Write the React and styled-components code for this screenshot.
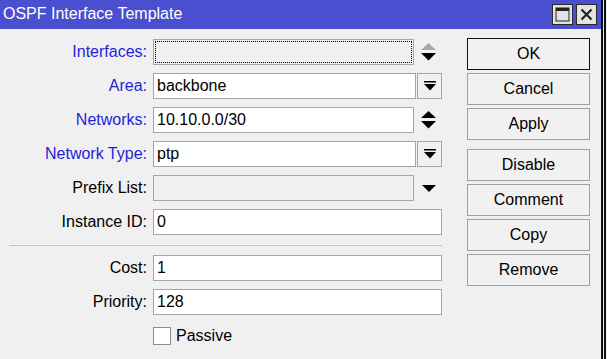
import React from 'react'
import styled, { createGlobalStyle } from 'styled-components'

const GlobalStyle = createGlobalStyle`
  html, body {
    margin: 0;
    padding: 0;
    background: #f0f0f0;
    font-family: "Liberation Sans", Arial, sans-serif;
  }
`

const upper = [
  { label: 'Interfaces', accent: true, value: '', disabled: true, focused: true, addon: 'spin-off' },
  { label: 'Area', accent: true, value: 'backbone', addon: 'drop' },
  { label: 'Networks', accent: true, value: '10.10.0.0/30', addon: 'spin' },
  { label: 'Network Type', accent: true, value: 'ptp', addon: 'drop' },
  { label: 'Prefix List', value: '', disabled: true, addon: 'arrow' },
  { label: 'Instance ID', value: '0' }
]

const lower = [
  { label: 'Cost', value: '1' },
  { label: 'Priority', value: '128' }
]

const actions = ['OK', 'Cancel', 'Apply', 'Disable', 'Comment', 'Copy', 'Remove']

function Spinner ({ dimUp }) {
  return (
    <svg width='15' height='18' viewBox='0 0 15 18'>
      <polygon points='7.5,0 15,7 0,7' fill={dimUp ? '#a3a9a3' : '#000'} />
      <polygon points='0,10 15,10 7.5,17.5' fill='#000' />
    </svg>
  )
}

function DropIcon () {
  return (
    <svg width='12' height='10' viewBox='0 0 12 10'>
      <rect x='0' y='0' width='12' height='1.5' fill='#000' />
      <polygon points='0,3 12,3 6,9.5' fill='#000' />
    </svg>
  )
}

function Addon ({ kind }) {
  if (kind === 'drop') return <DropButton><DropIcon /></DropButton>
  if (kind === 'spin') return <IconSlot><Spinner /></IconSlot>
  if (kind === 'spin-off') return <IconSlot><Spinner dimUp /></IconSlot>
  if (kind === 'arrow') {
    return (
      <IconSlot>
        <svg width='14' height='7' viewBox='0 0 14 7'>
          <polygon points='0,0 14,0 7,7' fill='#000' />
        </svg>
      </IconSlot>
    )
  }
  return null
}

function FieldRow ({ row }) {
  return (
    <Row>
      <Label $accent={row.accent}>{row.label}:</Label>
      <Field>
        <Input $disabled={row.disabled} $trimmed={row.addon === 'drop'}>
          {row.focused && <Focus />}
          {row.value}
        </Input>
        {row.addon && <Addon kind={row.addon} />}
      </Field>
    </Row>
  )
}

export default function App () {
  return (
    <>
      <GlobalStyle />
      <Frame>
        <TitleBar>
          <TitleText>OSPF Interface Template</TitleText>
          <TitleButtons>
            <TitleButton>
              <svg width='15' height='15' viewBox='0 0 15 15'>
                <rect x='1' y='1' width='13' height='13' fill='none' stroke='#222' strokeWidth='1' />
                <rect x='1' y='1' width='13' height='3' fill='#222' />
              </svg>
            </TitleButton>
            <TitleButton>
              <svg width='13' height='13' viewBox='0 0 13 13'>
                <path d='M1.5 1.5 L11.5 11.5 M11.5 1.5 L1.5 11.5' stroke='#222' strokeWidth='2.2' />
              </svg>
            </TitleButton>
          </TitleButtons>
        </TitleBar>
        <Body>
          <Form>
            {upper.map(row => <FieldRow key={row.label} row={row} />)}
            <Divider />
            {lower.map(row => <FieldRow key={row.label} row={row} />)}
            <Row>
              <span />
              <CheckLine>
                <Check />
                <span>Passive</span>
              </CheckLine>
            </Row>
          </Form>
          <Actions>
            {actions.map((name, i) => (
              <Button key={name} $primary={i === 0} $spaced={name === 'Disable'}>
                {name}
              </Button>
            ))}
          </Actions>
        </Body>
      </Frame>
    </>
  )
}

const Frame = styled.div`
  width: 601px;
  min-height: 100vh;
  background: #f0f0f0;
  box-shadow: 2px 0 0 #111, 3px 0 0 #e4e4e4, 5px 0 0 #111;
`

const TitleBar = styled.div`
  height: 29px;
  background: #4a4fcf;
  display: flex;
  align-items: center;
  justify-content: space-between;
  padding: 0 4px 0 3px;
`

const TitleText = styled.span`
  color: #fff;
  font-size: 16px;
  padding-bottom: 1px;
`

const TitleButtons = styled.div`
  display: flex;
  gap: 3px;
`

const TitleButton = styled.div`
  width: 19px;
  height: 19px;
  border: 1px solid #2a2a2a;
  background: #e3e3e3;
  display: flex;
  align-items: center;
  justify-content: center;
`

const Body = styled.div`
  display: flex;
  align-items: flex-start;
  gap: 25px;
  padding: 9px 0 0 9px;
`

const Form = styled.div`
  display: flex;
  flex-direction: column;
  gap: 8px;
  width: 433px;
  padding-top: 1px;
`

const Row = styled.div`
  display: grid;
  grid-template-columns: 138px 289px;
  column-gap: 6px;
  align-items: center;
  height: 26px;
`

const Label = styled.span`
  text-align: right;
  font-size: 16px;
  color: ${p => (p.$accent ? '#1f1fd8' : '#000')};
  white-space: nowrap;
`

const Field = styled.div`
  display: flex;
  height: 26px;
  gap: 1px;
`

const Input = styled.div`
  position: relative;
  flex: 1;
  box-sizing: border-box;
  height: 26px;
  border: 1px solid #a5a5a5;
  background: ${p => (p.$disabled ? '#f0f0f0' : '#fff')};
  font-size: 16px;
  line-height: 24px;
  padding-left: 3px;
  color: #000;
`

const Focus = styled.div`
  position: absolute;
  inset: 1px;
  border: 1px dotted #000;
`

const DropButton = styled.div`
  width: 25px;
  box-sizing: border-box;
  border: 1px solid #a5a5a5;
  background: #f0f0f0;
  display: flex;
  align-items: center;
  justify-content: center;
`

const IconSlot = styled.div`
  width: 27px;
  display: flex;
  align-items: center;
  justify-content: center;
`

const Divider = styled.div`
  height: 1px;
  background: #c4c4c4;
  margin: 2px 0 1px;
`

const CheckLine = styled.label`
  display: flex;
  align-items: center;
  gap: 5px;
  font-size: 16px;
`

const Check = styled.span`
  width: 16px;
  height: 16px;
  border: 1px solid #8c8c8c;
  background: #fff;
`

const Actions = styled.div`
  display: flex;
  flex-direction: column;
  gap: 3px;
  width: 123px;
`

const Button = styled.div`
  box-sizing: border-box;
  height: 32px;
  margin-top: ${p => (p.$spaced ? '6px' : '0')};
  border: 1px solid ${p => (p.$primary ? '#111' : '#a0a0a0')};
  background: #f1f1f1;
  font-size: 16px;
  display: flex;
  align-items: center;
  justify-content: center;
  color: #000;
`
